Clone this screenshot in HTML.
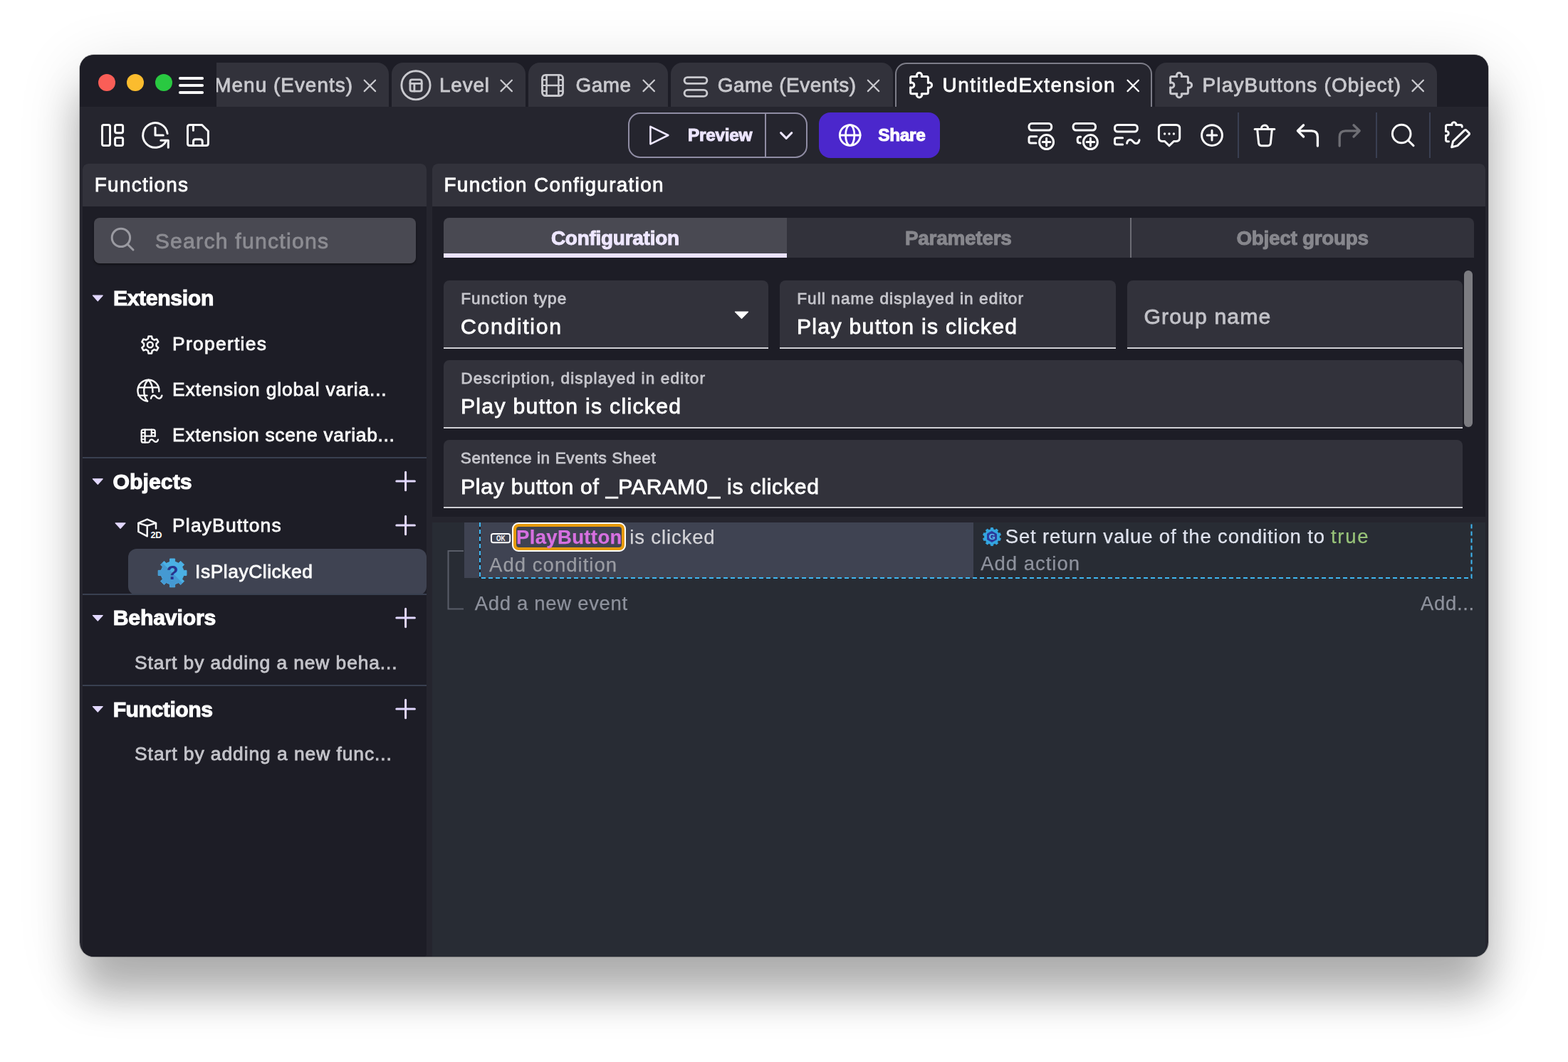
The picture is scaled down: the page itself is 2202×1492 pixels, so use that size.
<!DOCTYPE html>
<html lang="en">
<head>
<meta charset="utf-8">
<title>GDevelop - UntitledExtension</title>
<style>
html,body{margin:0;padding:0;}
body{width:2202px;height:1492px;background:#fff;position:relative;overflow:hidden;font-family:"Liberation Sans",sans-serif;}
#shadow{position:absolute;left:112px;top:77px;width:1978px;height:1267px;border-radius:20px;
  box-shadow:0 56px 56px rgba(0,0,0,.25),0 20px 90px rgba(0,0,0,.14),0 0 0 1px rgba(0,0,0,.22);}
#win{position:absolute;left:112px;top:77px;width:1978px;height:1267px;border-radius:20px;overflow:hidden;background:#25252e;}
#in{position:absolute;left:-112px;top:-77px;width:2202px;height:1492px;}
.r{position:absolute;}
.t{position:absolute;white-space:pre;line-height:0;}
#txt{position:absolute;left:0;top:0;width:2202px;height:1492px;will-change:transform;}
.tab{position:absolute;top:88px;height:62px;background:#32323b;border-radius:16px 16px 0 0;}
.field{position:absolute;background:#32323b;border-radius:8px 8px 0 0;box-sizing:border-box;border-bottom:2px solid #cfcfd4;height:96px;}
.div{position:absolute;left:116px;width:483px;height:2px;background:#394050;}
svg{position:absolute;overflow:visible;}
</style>
</head>
<body>
<div id="shadow"></div>
<div id="win"><div id="in">

<!-- title bar -->
<div class="r" style="left:112px;top:77px;width:1978px;height:73px;background:#1d1d26"></div>
<div class="r" style="left:138px;top:104px;width:24px;height:24px;border-radius:50%;background:#fa5e57"></div>
<div class="r" style="left:178px;top:104px;width:24px;height:24px;border-radius:50%;background:#fbbc2e"></div>
<div class="r" style="left:218px;top:104px;width:24px;height:24px;border-radius:50%;background:#29c941"></div>
<div class="r" style="left:250.5px;top:108.2px;width:35.3px;height:3.6px;border-radius:1.8px;background:#f7f7f7"></div>
<div class="r" style="left:250.5px;top:118.2px;width:35.3px;height:3.6px;border-radius:1.8px;background:#f7f7f7"></div>
<div class="r" style="left:250.5px;top:128.2px;width:35.3px;height:3.6px;border-radius:1.8px;background:#f7f7f7"></div>

<!-- tabs -->
<div class="tab" style="left:304px;width:242px;border-radius:0 16px 0 0"></div>
<div class="tab" style="left:550px;width:188px"></div>
<div class="tab" style="left:742px;width:196px"></div>
<div class="tab" style="left:942px;width:312px"></div>
<div class="tab" style="left:1257px;width:361px;background:#25252e;box-sizing:border-box;border:2px solid #7d7d88;border-bottom:none"></div>
<div class="tab" style="left:1622px;width:396px"></div>

<!-- toolbar buttons -->
<div class="r" style="left:882px;top:158px;width:252px;height:64px;box-sizing:border-box;border:2px solid #8f8ca3;border-radius:17px"></div>
<div class="r" style="left:1074px;top:158px;width:2px;height:64px;background:#8f8ca3"></div>
<div class="r" style="left:1150px;top:158px;width:170px;height:64px;border-radius:16px;background:#4b27cc"></div>
<div class="r" style="left:1738px;top:158px;width:2px;height:64px;background:#3a3f52"></div>
<div class="r" style="left:1932px;top:158px;width:2px;height:64px;background:#3a3f52"></div>
<div class="r" style="left:2006.5px;top:158px;width:2px;height:64px;background:#3a3f52"></div>

<!-- left panel -->
<div class="r" style="left:116px;top:230px;width:483px;height:1114px;background:#1d1d26;border-radius:8px 8px 4px 8px"></div>
<div class="r" style="left:116px;top:230px;width:483px;height:60px;background:#32323b;border-radius:8px 8px 0 0"></div>
<div class="r" style="left:132px;top:306px;width:452px;height:64px;background:#494952;border-radius:8px;box-shadow:0 2px 3px rgba(0,0,0,.4)"></div>
<div class="div" style="top:642px"></div>
<div class="r" style="left:180px;top:770.5px;width:419px;height:65px;background:#3f4352;border-radius:12px"></div>
<div class="div" style="top:834px"></div>
<div class="div" style="top:962px"></div>

<!-- right panel -->
<div class="r" style="left:607px;top:230px;width:1479px;height:496px;background:#1d1d26;border-radius:8px 8px 0 0"></div>
<div class="r" style="left:607px;top:230px;width:1479px;height:60px;background:#32323b;border-radius:8px 8px 0 0"></div>
<!-- config tabs -->
<div class="r" style="left:623px;top:306px;width:1447px;height:56px;background:#32323b;border-radius:8px 8px 0 0"></div>
<div class="r" style="left:623px;top:306px;width:482px;height:56px;background:#494952;border-radius:8px 0 0 0"></div>
<div class="r" style="left:623px;top:356px;width:482px;height:6px;background:#ebe3ff"></div>
<div class="r" style="left:1586.5px;top:306px;width:2px;height:56px;background:#6c6c74"></div>
<!-- fields -->
<div class="field" style="left:623px;top:394px;width:456px"></div>
<div class="field" style="left:1095px;top:394px;width:472px"></div>
<div class="field" style="left:1583px;top:394px;width:471px"></div>
<div class="field" style="left:623px;top:506px;width:1431px"></div>
<div class="field" style="left:623px;top:618px;width:1431px"></div>
<div class="r" style="left:2056px;top:380px;width:12px;height:220px;border-radius:6px;background:#7c7c81"></div>

<!-- events sheet -->
<div class="r" style="left:607px;top:734px;width:1479px;height:610px;background:#282c34"></div>
<div class="r" style="left:652px;top:734px;width:715px;height:78px;background:#3f4352"></div>
<!-- dashed selection -->
<svg style="left:0;top:0" width="2202" height="1492" viewBox="0 0 2202 1492" fill="none">
  <path d="M674 734 V812" stroke="#1c2029" stroke-width="2"/>
  <path d="M674 734 V812 H2066.5 V734" stroke="#3eb7f2" stroke-width="2" stroke-dasharray="6 4" />
  <path d="M651 774 H629.5 V855.5 H651" stroke="#595d68" stroke-width="2"/>
</svg>
<!-- param highlight -->
<div class="r" style="left:719px;top:734px;width:160px;height:41px;box-sizing:border-box;border:2px solid #fff;border-radius:9px;background:#e79a0c"></div>
<div class="r" style="left:725px;top:740px;width:148px;height:29px;border-radius:4px;background:#3f4352"></div>

<svg style="left:0;top:0" width="2202" height="1492" viewBox="0 0 2202 1492" fill="none" stroke-linecap="round" stroke-linejoin="round">
<g stroke="#fafafa" stroke-width="3">
<rect x="143.5" y="175.5" width="11" height="29" rx="2.2"/>
<rect x="161.6" y="175.5" width="11" height="11.2" rx="2.2"/>
<rect x="161.6" y="193.4" width="11" height="11.1" rx="2.2"/>
<path d="M235.13 187.59 A17.3 17.3 0 1 0 232.98 198.65"/>
<path d="M225.8 197.3 H236.3 V207.2"/>
<path d="M218 179.2 V190 H229.3"/>
<path d="M266.5 175.5 H283.6 L292.4 184.3 V201.5 Q292.4 204.5 289.4 204.5 H266.5 Q263.5 204.5 263.5 201.5 V178.5 Q263.5 175.5 266.5 175.5 Z"/>
<path d="M271.4 175.5 V183.3"/>
<path d="M271.5 204.5 V198.8 Q271.5 195.8 274.5 195.8 H281.2 Q284.2 195.8 284.2 198.8 V204.5"/>
</g>
<g stroke="#c9c9ce" stroke-width="2.9">
<circle cx="584" cy="119.8" r="20.1"/>
<rect x="576" y="111.9" width="16.2" height="16.2" rx="2.6"/>
<path d="M576 117.4 H592.2 M581.9 117.4 V128.1"/>
<rect x="761.5" y="105.4" width="29" height="29.1" rx="4.5"/>
<path d="M767.6 105.4 V134.5 M784.4 105.4 V134.5 M767.6 120 H784.4" stroke-width="2.6"/>
<path d="M761.5 112.2 H767.6 M761.5 120 H767.6 M761.5 127.8 H767.6 M784.4 112.2 H790.5 M784.4 120 H790.5 M784.4 127.8 H790.5" stroke-width="2.2"/>
<rect x="961.1" y="108.6" width="31.8" height="8.8" rx="4.4"/>
<rect x="961.1" y="126.4" width="31.8" height="9" rx="4.5"/>
</g>
<path d="M1280.6 107.6 H1287.8 A3.6 3.6 0 1 1 1294.2 107.6 H1301.4 Q1303.4 107.6 1303.4 109.6 V116.44999999999999 A3.6 3.6 0 1 1 1303.4 122.85 V129.7 Q1303.4 131.7 1301.4 131.7 H1294.2 A3.6 3.6 0 1 1 1287.8 131.7 H1280.6 Q1278.6 131.7 1278.6 129.7 V122.85 A3.6 3.6 0 1 0 1278.6 116.44999999999999 V109.6 Q1278.6 107.6 1280.6 107.6 Z" stroke="#ffffff" stroke-width="3"/>
<path d="M1645.6 107.6 H1652.8 A3.6 3.6 0 1 1 1659.2 107.6 H1666.4 Q1668.4 107.6 1668.4 109.6 V116.44999999999999 A3.6 3.6 0 1 1 1668.4 122.85 V129.7 Q1668.4 131.7 1666.4 131.7 H1659.2 A3.6 3.6 0 1 1 1652.8 131.7 H1645.6 Q1643.6 131.7 1643.6 129.7 V122.85 A3.6 3.6 0 1 0 1643.6 116.44999999999999 V109.6 Q1643.6 107.6 1645.6 107.6 Z" stroke="#c9c9ce" stroke-width="3"/>
<path d="M511.7 112.7 L527.1 128.1 M527.1 112.7 L511.7 128.1" stroke="#c9c9ce" stroke-width="2.2"/>
<path d="M703.5 112.7 L718.9000000000001 128.1 M718.9000000000001 112.7 L703.5 128.1" stroke="#c9c9ce" stroke-width="2.2"/>
<path d="M903.5 112.7 L918.9000000000001 128.1 M918.9000000000001 112.7 L903.5 128.1" stroke="#c9c9ce" stroke-width="2.2"/>
<path d="M1218.8 112.7 L1234.2 128.1 M1234.2 112.7 L1218.8 128.1" stroke="#c9c9ce" stroke-width="2.2"/>
<path d="M1583.5 112.7 L1598.9 128.1 M1598.9 112.7 L1583.5 128.1" stroke="#ffffff" stroke-width="2.2"/>
<path d="M1983.5 112.7 L1998.9 128.1 M1998.9 112.7 L1983.5 128.1" stroke="#c9c9ce" stroke-width="2.2"/>
<path d="M913.4 177.8 L938.4 190 L913.4 202.3 Z" stroke="#ece5ff" stroke-width="2.6"/>
<path d="M1096.6 186.6 L1104.2 194.4 L1111.8 186.6" stroke="#ece5ff" stroke-width="3"/>
<g stroke="#ffffff" stroke-width="2.8"><circle cx="1193.7" cy="190" r="14.4"/><ellipse cx="1193.7" cy="190" rx="6.2" ry="14.4"/><path d="M1179.3 190 H1208.1"/></g>
<g stroke="#fafafa" stroke-width="3">
<rect x="1445" y="173.6" width="31.7" height="9.4" rx="3.9"/>
<path d="M1455.8 191.7 H1447.6 Q1445 191.7 1445 194.3 V198.4 Q1445 201 1447.6 201 H1455"/>
<circle cx="1469.6" cy="199.6" r="10"/>
<path d="M1464.2 199.6 H1475 M1469.6 194.2 V205"/>
<rect x="1507.1" y="173.6" width="31.4" height="9.4" rx="3.9"/>
<path d="M1517.6 192.2 H1516.6 Q1513.2 192.2 1513.2 195.6 V197.6 Q1513.2 201 1516.6 201 H1517.2"/>
<circle cx="1531.4" cy="199.6" r="10"/>
<path d="M1526 199.6 H1536.8 M1531.4 194.2 V205"/>
<rect x="1565.5" y="175.5" width="31.8" height="9.6" rx="3.9"/>
<path d="M1576.6 193.8 H1568.1 Q1565.5 193.8 1565.5 196.4 V200.4 Q1565.5 203 1568.1 203 H1576.6"/>
<path d="M1582.6 201.2 C1583.6 195.6 1588 195 1591 198.6 C1594 202.6 1598.6 203 1600 196.8"/>
<path d="M1632.4 175.4 H1651.7 Q1656.7 175.4 1656.7 180.4 V193.5 Q1656.7 198.5 1651.7 198.5 H1648.4 L1642 204.8 L1635.6 198.5 H1632.4 Q1627.4 198.5 1627.4 193.5 V180.4 Q1627.4 175.4 1632.4 175.4 Z"/>
<g fill="#fafafa" stroke="none"><circle cx="1635.6" cy="188" r="1.65"/><circle cx="1642" cy="188" r="1.65"/><circle cx="1648.4" cy="188" r="1.65"/></g>
<circle cx="1702" cy="190.1" r="14.4"/>
<path d="M1695.2 190.1 H1708.8 M1702 183.3 V196.9"/>
<path d="M1762.1 181.4 H1789.8"/>
<path d="M1771.4 181 V180.5 A4.65 4.65 0 0 1 1780.7 180.5 V181"/>
<path d="M1765.7 182 L1767.6 201.2 Q1768 204.7 1771.5 204.7 H1780.5 Q1784 204.7 1784.4 201.2 L1786.3 182"/>
<path d="M1830.6 175.8 L1822.4 183.8 L1830.6 192 M1822.6 183.8 H1842 Q1850.4 183.8 1850.4 192.2 V205" stroke-width="3.3"/>
</g>
<path d="M1901 175.8 L1909.2 183.8 L1901 192 M1909 183.8 H1889.6 Q1881.2 183.8 1881.2 192.2 V205" stroke="#6e6e74" stroke-width="3.3"/>
<g stroke="#fafafa" stroke-width="3">
<circle cx="1968.2" cy="188" r="12.8"/><path d="M1977.5 197.3 L1985 204.6"/>
<path d="M2053.2 178.2 V177.7 Q2053.2 175.5 2051 175.5 H2044.8 A3 3 0 1 0 2039 175.5 H2032.7 Q2030.5 175.5 2030.5 177.7 V184.5 A3 3 0 1 1 2030.5 190.3 V196.6 Q2030.5 198.8 2032.7 198.8 H2034.5"/>
<path d="M2056.6 183.2 Q2058 181.8 2059.4 183.2 L2062.8 186.6 Q2064.2 188 2062.8 189.4 L2046.8 204.6 L2038.6 206.8 L2040.6 198.6 Z"/>
</g>
<g stroke="#9a9aa1" stroke-width="3"><circle cx="169.9" cy="333.9" r="12.7"/><path d="M179.2 343.3 L187 351"/></g>
<path d="M207.90 475.98 L208.58 472.40 L213.02 472.40 L213.70 475.98 L216.64 477.68 L220.08 476.48 L222.30 480.33 L219.54 482.70 L219.54 486.10 L222.30 488.47 L220.08 492.32 L216.64 491.12 L213.70 492.82 L213.02 496.40 L208.58 496.40 L207.90 492.82 L204.96 491.12 L201.52 492.32 L199.30 488.47 L202.06 486.10 L202.06 482.70 L199.30 480.33 L201.52 476.48 L204.96 477.68 Z" stroke="#fafafa" stroke-width="2.5"/>
<circle cx="210.8" cy="484.4" r="3.9" stroke="#fafafa" stroke-width="2.5"/>
<g stroke="#fafafa" stroke-width="2.4">
<path d="M223.34 550 A15 15 0 1 0 207.1 563.64"/>
<path d="M208.4 533.7 C203.5 537.5 202.2 543 202.2 548.7 C202.2 554.5 203.8 560 207.1 563.6"/>
<path d="M208.4 533.7 C213 537.5 214.4 543 214.5 551"/>
<path d="M194.4 544.4 H222.6 M194.4 555.6 H206.5"/>
<path d="M212 559.8 C213 554.8 216.6 554.4 219.2 557.4 C221.8 560.6 226 561 227.4 555.6"/>
</g>
<g stroke="#fafafa" stroke-width="2.3">
<path d="M208 621.7 H201.2 Q198.7 621.7 198.7 619.2 V606.1 Q198.7 603.6 201.2 603.6 H215.2 Q217.7 603.6 217.7 606.1 V613"/>
<path d="M203.6 603.6 V621.7 M212.8 603.6 V612.6 M203.6 612.6 H217.7"/>
<path d="M198.7 608 H203.6 M198.7 612.6 H203.6 M198.7 617.2 H203.6 M212.8 608 H217.7" stroke-width="1.8"/>
<path d="M209.6 621 C210.4 617 213.4 616.4 215.6 619 C217.6 621.6 221 622 222 617.6"/>
</g>
<g stroke="#fafafa" stroke-width="2.5">
<path d="M206.7 729.6 L219 734.9 L206.7 738.6 L194.4 734.9 Z"/>
<path d="M194.4 734.9 V747 L206.7 753.4 V738.6 M219 734.9 V742.4"/>
</g>
<text x="211.6" y="755.7" font-family="Liberation Sans, sans-serif" font-size="12.8" font-weight="700" fill="#fafafa" stroke="none" letter-spacing="-0.4">2D</text>
<path d="M238.59 789.08 L238.59 785.01 L245.61 785.01 L245.61 789.08 L250.80 791.24 L253.69 788.35 L258.65 793.31 L255.76 796.20 L257.92 801.39 L261.99 801.39 L261.99 808.41 L257.92 808.41 L255.76 813.60 L258.65 816.49 L253.69 821.45 L250.80 818.56 L245.61 820.72 L245.61 824.79 L238.59 824.79 L238.59 820.72 L233.40 818.56 L230.51 821.45 L225.55 816.49 L228.44 813.60 L226.28 808.41 L222.21 808.41 L222.21 801.39 L226.28 801.39 L228.44 796.20 L225.55 793.31 L230.51 788.35 L233.40 791.24 Z" fill="#4bb0e4" stroke="#4bb0e4" stroke-width="1"/>
<path d="M256.17 818.97 L253.69 821.45 L250.80 818.56 L245.61 820.72 L245.61 824.79 L238.59 824.79 L238.59 820.72 L233.40 818.56 L230.51 821.45 L225.55 816.49 L228.44 813.60 L226.28 808.41 L222.21 808.41 L222.21 801.39 L226.28 801.39 L228.44 796.20 L225.55 793.31 L228.03 790.83 Z" fill="#4599d2"/>
<text x="242.3" y="814.2" text-anchor="middle" font-family="Liberation Sans, sans-serif" font-size="27" font-weight="700" fill="#28348c" stroke="none">?</text>
<path d="M556.8000000000001 676 H582.4 M569.6 663.2 V688.8" stroke="#e2d8ff" stroke-width="3"/>
<path d="M556.8000000000001 738 H582.4 M569.6 725.2 V750.8" stroke="#e2d8ff" stroke-width="3"/>
<path d="M556.8000000000001 868 H582.4 M569.6 855.2 V880.8" stroke="#e2d8ff" stroke-width="3"/>
<path d="M556.8000000000001 996 H582.4 M569.6 983.2 V1008.8" stroke="#e2d8ff" stroke-width="3"/>
<path d="M130.4 415.2 H144.2 L137.3 422.8 Z" fill="#e2d8ff" stroke="#e2d8ff" stroke-width="1.2" stroke-linejoin="round"/>
<path d="M130.4 672.8 H144.2 L137.3 680.4 Z" fill="#e2d8ff" stroke="#e2d8ff" stroke-width="1.2" stroke-linejoin="round"/>
<path d="M130.4 864.6 H144.2 L137.3 872.2 Z" fill="#e2d8ff" stroke="#e2d8ff" stroke-width="1.2" stroke-linejoin="round"/>
<path d="M130.4 992.6 H144.2 L137.3 1000.2 Z" fill="#e2d8ff" stroke="#e2d8ff" stroke-width="1.2" stroke-linejoin="round"/>
<path d="M162.1 734.9 H176 L169.05 742.4 Z" fill="#e2d8ff" stroke="#e2d8ff" stroke-width="1.2" stroke-linejoin="round"/>
<path d="M1032.4 438.1 H1050.6 L1041.5 447.4 Z" fill="#ffffff" stroke="#ffffff" stroke-width="1.2" stroke-linejoin="round"/>
<rect x="690" y="750" width="26.2" height="12.2" rx="2.6" stroke="#ffffff" stroke-width="2"/>
<text transform="translate(703.2 759.8) scale(0.82 1)" text-anchor="middle" font-family="Liberation Sans, sans-serif" font-size="10.2" font-weight="700" fill="#ffffff" stroke="none">OK</text>
<path d="M1391.19 743.86 L1391.46 741.59 L1394.54 741.59 L1394.81 743.86 L1397.56 744.75 L1399.11 743.08 L1401.59 744.88 L1400.48 746.88 L1402.18 749.22 L1404.42 748.78 L1405.37 751.70 L1403.30 752.65 L1403.30 755.55 L1405.37 756.50 L1404.42 759.42 L1402.18 758.98 L1400.48 761.32 L1401.59 763.32 L1399.11 765.12 L1397.56 763.45 L1394.81 764.34 L1394.54 766.61 L1391.46 766.61 L1391.19 764.34 L1388.44 763.45 L1386.89 765.12 L1384.41 763.32 L1385.52 761.32 L1383.82 758.98 L1381.58 759.42 L1380.63 756.50 L1382.70 755.55 L1382.70 752.65 L1380.63 751.70 L1381.58 748.78 L1383.82 749.22 L1385.52 746.88 L1384.41 744.88 L1386.89 743.08 L1388.44 744.75 Z" fill="#34a6e0" stroke="#34a6e0" stroke-width="1"/>
<path d="M1393 746.6 L1399.5 750.3 V757.9 L1393 761.6 L1386.5 757.9 V750.3 Z" fill="#2b3a9c" stroke="#2b3a9c" stroke-width="1"/>
<text x="1393.2" y="758.3" text-anchor="middle" font-family="Liberation Sans, sans-serif" font-size="11.5" font-weight="700" fill="#5cc0f0" stroke="none">G</text>
</svg>

<div id="txt">
<span class="t" style="left:301.32px;top:120.33px;font-size:27.9px;font-weight:400;color:#c9c9ce;letter-spacing:1.024px;-webkit-text-stroke:0.8px">Menu (Events)</span>
<span class="t" style="left:617.02px;top:120.33px;font-size:27.9px;font-weight:400;color:#c9c9ce;letter-spacing:0.816px;-webkit-text-stroke:0.8px">Level</span>
<span class="t" style="left:808.52px;top:120.33px;font-size:27.9px;font-weight:400;color:#c9c9ce;letter-spacing:0.500px;-webkit-text-stroke:0.8px">Game</span>
<span class="t" style="left:1007.77px;top:120.33px;font-size:27.9px;font-weight:400;color:#c9c9ce;letter-spacing:0.555px;-webkit-text-stroke:0.8px">Game (Events)</span>
<span class="t" style="left:1323.52px;top:120.33px;font-size:27.9px;font-weight:400;color:#ffffff;letter-spacing:1.556px;-webkit-text-stroke:0.8px">UntitledExtension</span>
<span class="t" style="left:1688.52px;top:120.33px;font-size:27.9px;font-weight:400;color:#c9c9ce;letter-spacing:1.193px;-webkit-text-stroke:0.8px">PlayButtons (Object)</span>
<span class="t" style="left:965.96px;top:189.55px;font-size:24.4px;font-weight:700;color:#ece5ff;letter-spacing:-0.272px;-webkit-text-stroke:1.0px">Preview</span>
<span class="t" style="left:1233.21px;top:189.55px;font-size:24.4px;font-weight:700;color:#ffffff;letter-spacing:-0.303px;-webkit-text-stroke:1.0px">Share</span>
<span class="t" style="left:132.77px;top:260.33px;font-size:27.9px;font-weight:400;color:#ffffff;letter-spacing:1.285px;-webkit-text-stroke:0.8px">Functions</span>
<span class="t" style="left:623.52px;top:260.33px;font-size:27.9px;font-weight:400;color:#ffffff;letter-spacing:1.301px;-webkit-text-stroke:0.8px">Function Configuration</span>
<span class="t" style="left:217.69px;top:339.09px;font-size:30.2px;font-weight:400;color:#8c8c92;letter-spacing:1.234px;-webkit-text-stroke:0.8px">Search functions</span>
<span class="t" style="left:158.89px;top:418.79px;font-size:30.2px;font-weight:700;color:#ffffff;letter-spacing:-0.349px;-webkit-text-stroke:1.0px">Extension</span>
<span class="t" style="left:242.08px;top:482.60px;font-size:26.4px;font-weight:400;color:#fafafa;letter-spacing:1.285px;-webkit-text-stroke:0.8px">Properties</span>
<span class="t" style="left:242.08px;top:547.10px;font-size:26.4px;font-weight:400;color:#fafafa;letter-spacing:0.850px;-webkit-text-stroke:0.8px">Extension global varia...</span>
<span class="t" style="left:242.08px;top:610.85px;font-size:26.4px;font-weight:400;color:#fafafa;letter-spacing:0.708px;-webkit-text-stroke:0.8px">Extension scene variab...</span>
<span class="t" style="left:158.39px;top:676.54px;font-size:30.2px;font-weight:700;color:#ffffff;letter-spacing:0.082px;-webkit-text-stroke:1.0px">Objects</span>
<span class="t" style="left:242.08px;top:738.35px;font-size:26.4px;font-weight:400;color:#fafafa;letter-spacing:1.175px;-webkit-text-stroke:0.8px">PlayButtons</span>
<span class="t" style="left:274.08px;top:802.85px;font-size:26.4px;font-weight:400;color:#fafafa;letter-spacing:0.537px;-webkit-text-stroke:0.8px">IsPlayClicked</span>
<span class="t" style="left:158.64px;top:868.29px;font-size:30.2px;font-weight:700;color:#ffffff;letter-spacing:-0.157px;-webkit-text-stroke:1.0px">Behaviors</span>
<span class="t" style="left:189.08px;top:930.85px;font-size:26.4px;font-weight:400;color:#c4c4ca;letter-spacing:0.903px;-webkit-text-stroke:0.8px">Start by adding a new beha...</span>
<span class="t" style="left:158.64px;top:996.54px;font-size:30.2px;font-weight:700;color:#ffffff;letter-spacing:-0.468px;-webkit-text-stroke:1.0px">Functions</span>
<span class="t" style="left:189.08px;top:1058.85px;font-size:26.4px;font-weight:400;color:#c4c4ca;letter-spacing:0.942px;-webkit-text-stroke:0.8px">Start by adding a new func...</span>
<span class="t" style="left:773.92px;top:334.58px;font-size:27.9px;font-weight:700;color:#eee7ff;letter-spacing:-0.220px;-webkit-text-stroke:1.0px">Configuration</span>
<span class="t" style="left:1270.92px;top:334.58px;font-size:27.9px;font-weight:700;color:#87878d;letter-spacing:-0.228px;-webkit-text-stroke:1.0px">Parameters</span>
<span class="t" style="left:1736.42px;top:334.58px;font-size:27.9px;font-weight:700;color:#87878d;letter-spacing:-0.283px;-webkit-text-stroke:1.0px">Object groups</span>
<span class="t" style="left:647.21px;top:420.17px;font-size:22.6px;font-weight:400;color:#c6c6cc;letter-spacing:1.037px;-webkit-text-stroke:0.8px">Function type</span>
<span class="t" style="left:646.94px;top:459.04px;font-size:30.2px;font-weight:400;color:#ffffff;letter-spacing:1.696px;-webkit-text-stroke:0.8px">Condition</span>
<span class="t" style="left:1119.21px;top:420.17px;font-size:22.6px;font-weight:400;color:#c6c6cc;letter-spacing:1.079px;-webkit-text-stroke:0.8px">Full name displayed in editor</span>
<span class="t" style="left:1118.94px;top:459.04px;font-size:30.2px;font-weight:400;color:#ffffff;letter-spacing:1.296px;-webkit-text-stroke:0.8px">Play button is clicked</span>
<span class="t" style="left:1606.44px;top:444.54px;font-size:30.2px;font-weight:400;color:#c2c2c8;letter-spacing:1.117px;-webkit-text-stroke:0.8px">Group name</span>
<span class="t" style="left:647.21px;top:532.17px;font-size:22.6px;font-weight:400;color:#c6c6cc;letter-spacing:1.134px;-webkit-text-stroke:0.8px">Description, displayed in editor</span>
<span class="t" style="left:646.94px;top:571.29px;font-size:30.2px;font-weight:400;color:#ffffff;letter-spacing:1.296px;-webkit-text-stroke:0.8px">Play button is clicked</span>
<span class="t" style="left:646.71px;top:644.17px;font-size:22.6px;font-weight:400;color:#c6c6cc;letter-spacing:0.612px;-webkit-text-stroke:0.8px">Sentence in Events Sheet</span>
<span class="t" style="left:646.94px;top:684.04px;font-size:30.2px;font-weight:400;color:#ffffff;letter-spacing:0.721px;-webkit-text-stroke:0.8px">Play button of _PARAM0_ is clicked</span>
<span class="t" style="left:724.97px;top:755.47px;font-size:27.5px;font-weight:700;color:#d670e0;letter-spacing:0.358px;-webkit-text-stroke:0.25px">PlayButton</span>
<span class="t" style="left:884.24px;top:755.47px;font-size:27.5px;font-weight:400;color:#d4d4d8;letter-spacing:0.874px;-webkit-text-stroke:0.25px">is clicked</span>
<span class="t" style="left:687.04px;top:794.47px;font-size:27.5px;font-weight:400;color:#9a9ca3;letter-spacing:1.039px;-webkit-text-stroke:0.25px">Add condition</span>
<span class="t" style="left:1411.74px;top:754.17px;font-size:27.5px;font-weight:400;color:#dfe3ee;letter-spacing:0.838px;-webkit-text-stroke:0.25px">Set return value of the condition to</span>
<span class="t" style="left:1868.94px;top:754.17px;font-size:27.5px;font-weight:400;color:#98c379;letter-spacing:1.778px;-webkit-text-stroke:0.25px">true</span>
<span class="t" style="left:1377.24px;top:792.27px;font-size:27.5px;font-weight:400;color:#8e929d;letter-spacing:0.973px;-webkit-text-stroke:0.25px">Add action</span>
<span class="t" style="left:666.64px;top:848.07px;font-size:27.5px;font-weight:400;color:#8e929d;letter-spacing:0.696px;-webkit-text-stroke:0.25px">Add a new event</span>
<span class="t" style="left:1995.04px;top:848.07px;font-size:27.5px;font-weight:400;color:#8e929d;letter-spacing:0.673px;-webkit-text-stroke:0.25px">Add...</span>
</div>
<div class="r" style="left:292px;top:88px;width:12px;height:62px;background:#1d1d26"></div>

</div></div>
</body>
</html>
